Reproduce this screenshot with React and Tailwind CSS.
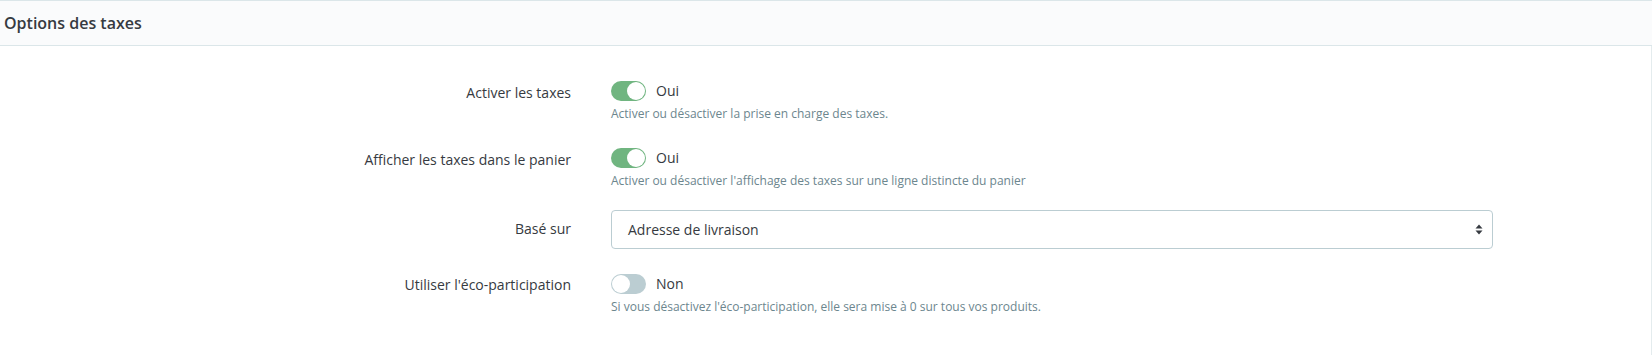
import React from "react";

// interrupteur Oui / Non
const Toggle = ({ on }) => (
    <div className="flex items-center h-[20px]">
        <div
            className={
                on
                    ? "w-[35px] h-[20px] rounded-full bg-[#70b580] flex items-center justify-end px-[1px]"
                    : "w-[35px] h-[20px] rounded-full bg-[#bbcdd2] flex items-center justify-start px-[1px]"
            }
        >
            <div className="w-[18px] h-[18px] rounded-full bg-white" />
        </div>
        <span className="ml-[10px] text-[14px] leading-[20px] text-[#363a41]">{on ? "Oui" : "Non"}</span>
    </div>
);

const Row = ({ label, labelPad, className, children }) => (
    <div className={"flex items-start " + className}>
        <div className={"w-[571px] shrink-0 text-right text-[14px] leading-[20px] text-[#363a41] " + labelPad}>
            {label}
        </div>
        <div className="ml-[40px]">{children}</div>
    </div>
);

const Help = ({ children }) => (
    <div className="mt-[5px] text-[12px] leading-[16px] text-[#6c868e]">{children}</div>
);

export default function App() {
    return (
        <div className="min-h-[355px] bg-white font-['Open_Sans',sans-serif] flex flex-col">
            {/* en-tête */}
            <div className="h-[46px] border-y border-[#dbe6e9] bg-[#fafbfc] flex items-center pl-[4px]">
                <h3 className="text-[16px] font-semibold text-[#363a41]">Options des taxes</h3>
            </div>

            <div className="flex-1 border-r border-[#e4ecee] pt-[35px]">
                <Row label="Activer les taxes" labelPad="pt-[2px]" className="mb-[26px]">
                    <Toggle on />
                    <Help>Activer ou désactiver la prise en charge des taxes.</Help>
                </Row>

                <Row label="Afficher les taxes dans le panier" labelPad="pt-[2px]" className="mb-[21px]">
                    <Toggle on />
                    <Help>Activer ou désactiver l'affichage des taxes sur une ligne distincte du panier</Help>
                </Row>

                <Row label="Basé sur" labelPad="pt-[9px]" className="mb-[25px]">
                    <div className="w-[882px] h-[39px] border border-[#bbcdd2] rounded-[4px] flex items-center justify-between pl-[16px] pr-[9px]">
                        <span className="text-[14px] text-[#363a41]">Adresse de livraison</span>
                        <svg width="8" height="11" viewBox="0 0 8 11">
                            <path d="M4 0.5 L7.5 4.5 H0.5 Z" fill="#363a41" />
                            <path d="M4 10.5 L7.5 6.5 H0.5 Z" fill="#363a41" />
                        </svg>
                    </div>
                </Row>

                <Row label="Utiliser l'éco-participation" labelPad="pt-[1px]" className="">
                    <Toggle on={false} />
                    <Help>Si vous désactivez l'éco-participation, elle sera mise à 0 sur tous vos produits.</Help>
                </Row>
            </div>
        </div>
    );
}
